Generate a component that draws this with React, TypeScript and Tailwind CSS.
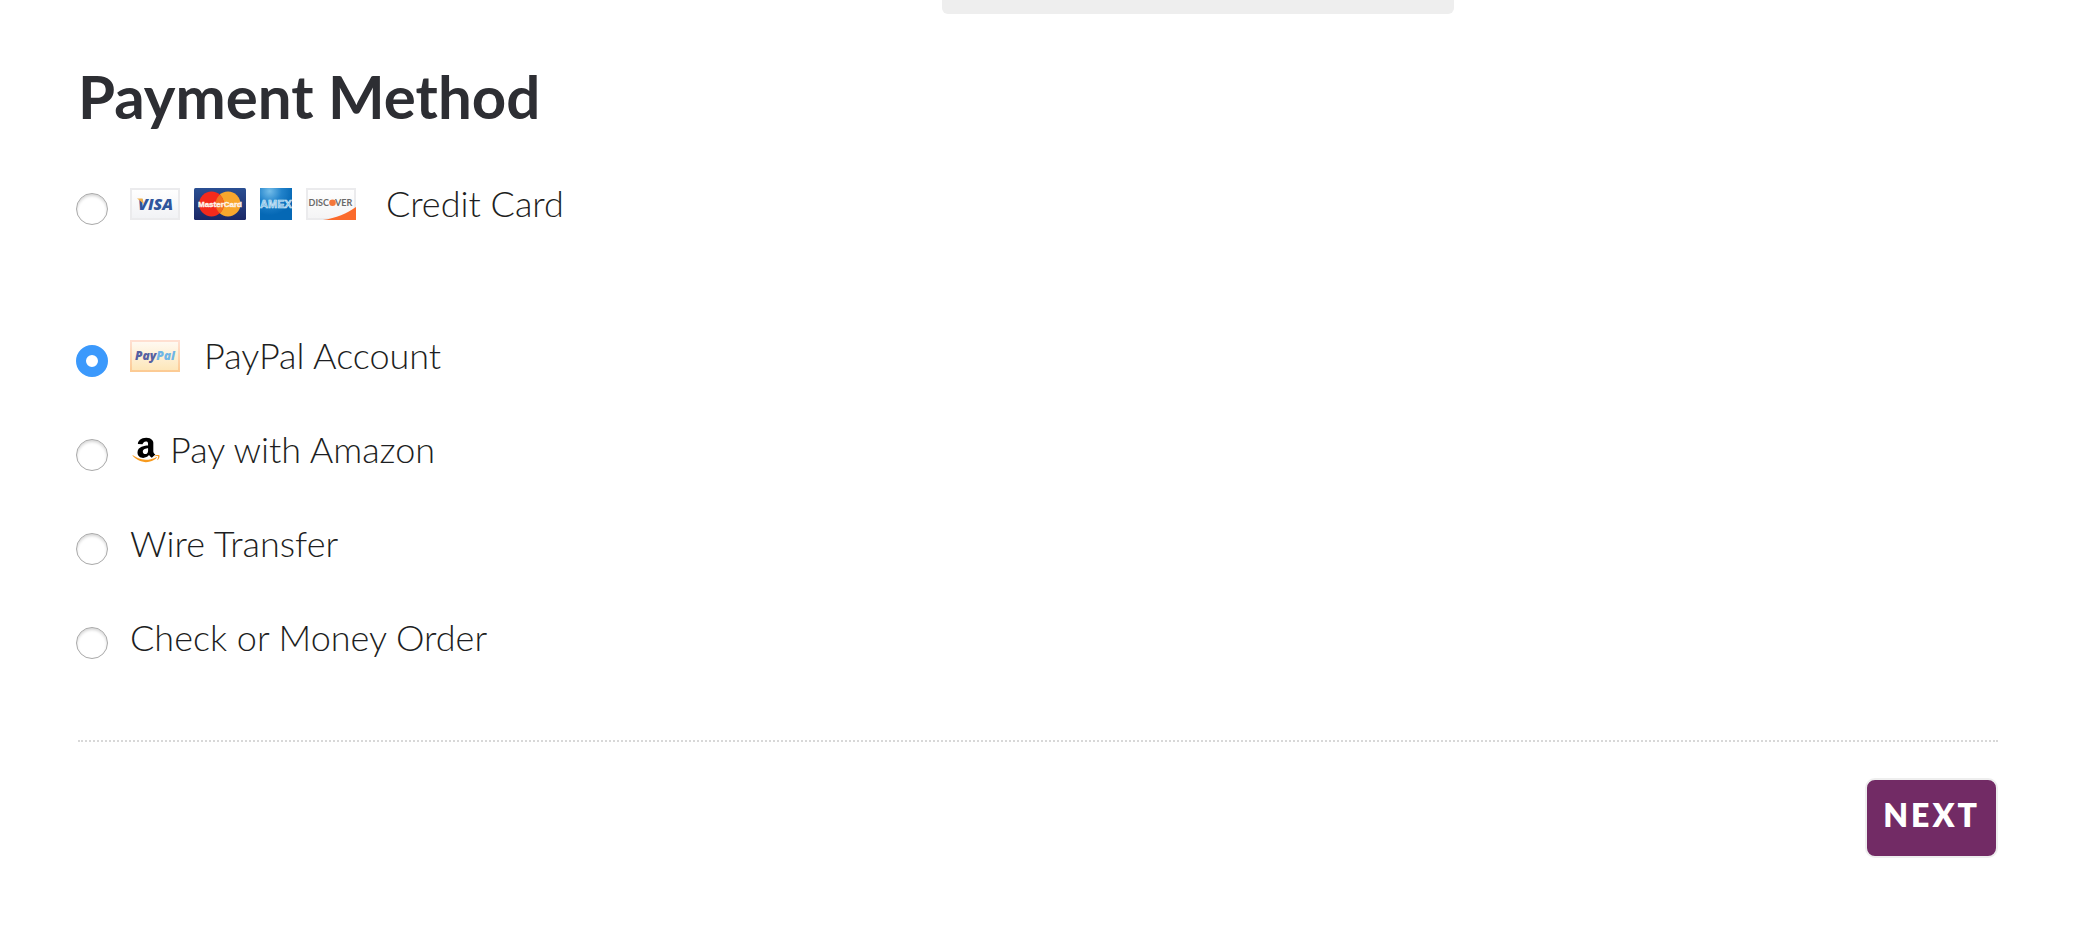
import { useState } from "react";
import type { ReactNode } from "react";

function Visa() {
  return (
    <svg viewBox="0 0 50 32" className="h-8 w-[50px]" role="img" aria-label="Visa">
      <defs>
        <linearGradient id="visa-bg" x1="0" y1="0" x2="0" y2="1">
          <stop offset="0" stopColor="#ffffff" />
          <stop offset="1" stopColor="#f1f2f5" />
        </linearGradient>
      </defs>
      <rect x="1" y="1" width="48" height="30" fill="url(#visa-bg)" stroke="#ebebed" strokeWidth="2" />
      <text x="8" y="22" fontFamily="'Open Sans', sans-serif" fontSize="16" fontWeight="800" fontStyle="italic" fill="#2f559d">
        VISA
      </text>
      <path d="M7 10.500h5.500l1.600 6C12 14.500 10 12.500 7 10.500z" fill="#efb04c" />
    </svg>
  );
}

function MasterCard() {
  return (
    <svg viewBox="0 0 52 32" className="h-8 w-[52px]" role="img" aria-label="MasterCard">
      <defs>
        <linearGradient id="mc-bg" x1="0" y1="0" x2="0" y2="1">
          <stop offset="0" stopColor="#2a4f92" />
          <stop offset="1" stopColor="#1b2766" />
        </linearGradient>
      </defs>
      <rect width="52" height="32" rx="1.500" fill="url(#mc-bg)" />
      <circle cx="34" cy="16" r="12.500" fill="#f8a72d" />
      <circle cx="17.500" cy="16" r="12.500" fill="#f52a1c" />
      <path d="M25.700 6.700a12.500 12.500 0 0 1 0 18.600a12.500 12.500 0 0 1 0-18.600z" fill="#f2711f" />
      <text
        x="26"
        y="19"
        textAnchor="middle"
        fontFamily="'Liberation Sans', sans-serif"
        fontSize="8"
        fontWeight="700"
        fill="#fff3ea"
        stroke="#fff3ea"
        strokeWidth="0.4"
      >
        MasterCard
      </text>
    </svg>
  );
}

function Amex() {
  return (
    <svg viewBox="0 0 32 32" className="size-8 overflow-hidden" role="img" aria-label="American Express">
      <defs>
        <radialGradient id="amex-bg" cx="0.3" cy="0.1" r="0.75">
          <stop offset="0" stopColor="#74bde9" />
          <stop offset="0.5" stopColor="#2283cb" />
          <stop offset="1" stopColor="#0568b5" />
        </radialGradient>
      </defs>
      <rect width="32" height="32" fill="url(#amex-bg)" />
      <text x="16" y="20" textAnchor="middle" fontFamily="'Liberation Sans', sans-serif" fontSize="11" fontWeight="700" fill="#7fbce6" stroke="#d9ecf9" strokeWidth="0.6">
        AMEX
      </text>
    </svg>
  );
}

function Discover() {
  return (
    <svg viewBox="0 0 50 32" className="h-8 w-[50px]" role="img" aria-label="Discover">
      <defs>
        <linearGradient id="disc-bg" x1="0" y1="0" x2="0" y2="1">
          <stop offset="0" stopColor="#ffffff" />
          <stop offset="1" stopColor="#f4f4f5" />
        </linearGradient>
      </defs>
      <rect x="1" y="1" width="48" height="30" fill="url(#disc-bg)" stroke="#ebebed" strokeWidth="2" />
      <path d="M50 19v13H17c13-2 24-6.500 33-13z" fill="#fb6a2b" />
      <text x="23" y="18" textAnchor="end" fontFamily="'Lato', sans-serif" fontSize="9" fontWeight="700" fill="#6a6a6a">
        DISC
      </text>
      <circle cx="26.500" cy="14.700" r="3.300" fill="#f4773b" />
      <text x="29" y="18" fontFamily="'Lato', sans-serif" fontSize="9" fontWeight="700" fill="#6a6a6a">
        VER
      </text>
    </svg>
  );
}

function PayPal() {
  return (
    <svg viewBox="0 0 50 32" className="h-8 w-[50px]" role="img" aria-label="PayPal">
      <defs>
        <linearGradient id="pp-bg" x1="0" y1="0" x2="0" y2="1">
          <stop offset="0" stopColor="#fffaf3" />
          <stop offset="1" stopColor="#fde6b8" />
        </linearGradient>
        <linearGradient id="pp-edge" x1="0" y1="0" x2="0" y2="1">
          <stop offset="0" stopColor="#ffe0d2" />
          <stop offset="1" stopColor="#fccb94" />
        </linearGradient>
      </defs>
      <rect x="1" y="1" width="48" height="30" fill="url(#pp-bg)" stroke="url(#pp-edge)" strokeWidth="2" />
      <text x="25" y="20" textAnchor="middle" fontFamily="'Open Sans', sans-serif" fontSize="12" fontWeight="800" fontStyle="italic" fill="#5560a2">
        Pay<tspan fill="#6fb5e6">Pal</tspan>
      </text>
    </svg>
  );
}

function Amazon() {
  return (
    <svg viewBox="-32 0 512 512" className="size-8" role="img" aria-label="Amazon">
      <path
        fill="#000000"
        transform="translate(0 30) scale(1 0.95)"
        d="M257.2 162.7c-48.7 1.8-169.5 15.5-169.5 117.5 0 109.5 138.3 114 183.5 43.2 6.5 10.2 35.4 37.5 45.3 46.8l56.8-56S341 288.9 341 261.4V114.3C341 89 316.5 32 228.7 32 140.7 32 94 87 94 136.3l73.5 6.8c16.3-49.5 54.2-49.5 54.2-49.5 40.7-.1 35.500 29.8 35.500 69.1zm0 86.8c0 80-84.2 68-84.2 17.2 0-47.2 50.500-56.7 84.2-57.8v40.6z"
      />
      <path
        fill="#f79a1e"
        transform="translate(0 -30)"
        d="M393.2 413c-7.7 10-70 67-174.500 67S34.2 408.500 9.7 379c-6.8-7.7 1-11.3 5.500-8.3C88.500 415.2 203 488.500 387.7 401c7.500-3.7 13.3 2 5.500 12zm39.8 2.2c-6.500 15.8-16 26.8-21.2 31-5.500 4.500-9.500 2.7-6.500-3.8s19.3-46.500 12.7-55c-6.500-8.3-37-4.3-48-3.2-10.8 1-13 2-14-.3-2.3-5.7 21.7-15.500 37.500-17.500 15.7-1.8 41-.8 46 5.7 3.7 5.1 0 27.1-6.500 43.1z"
      />
    </svg>
  );
}

type Method = { id: string; label: string; icons?: ReactNode; row: string; text: string };

const methods: Method[] = [
  {
    id: "card",
    label: "Credit Card",
    icons: (
      <>
        <Visa />
        <MasterCard />
        <Amex />
        <Discover />
      </>
    ),
    row: "mb-[58px]",
    text: "ml-[30px]",
  },
  { id: "paypal", label: "PayPal Account", icons: <PayPal />, row: "", text: "ml-6" },
  { id: "amazon", label: "Pay with Amazon", icons: <Amazon />, row: "", text: "ml-2" },
  { id: "wire", label: "Wire Transfer", row: "", text: "" },
  { id: "check", label: "Check or Money Order", row: "", text: "" },
];

export default function App() {
  const [selected, setSelected] = useState("paypal");

  return (
    <main className="bg-white pr-[82px] pl-[78px] font-['Lato',sans-serif] text-[#2d2e33]">
      <div className="ml-[45%] h-3.5 w-[512px] rounded-b-md bg-[#eeeeee]" />
      <form onSubmit={(e) => e.preventDefault()}>
        <h1 id="payment-title" className="mt-[46px] text-[60px] leading-[72px] font-bold">
          Payment Method
        </h1>
        <div role="radiogroup" aria-labelledby="payment-title" className="mt-12 -ml-0.5 flex flex-col gap-[46px]">
          {methods.map((m) => (
            <div key={m.id} className={`flex h-12 items-center ${m.row}`}>
              <input
                type="radio"
                id={m.id}
                name="payment"
                value={m.id}
                checked={selected === m.id}
                onChange={() => setSelected(m.id)}
                className="mt-2.5 size-8 shrink-0 appearance-none rounded-full border border-[#a9a9a9] bg-white shadow-[inset_0_2px_3px_rgba(0,0,0,0.16)] checked:border-[10px] checked:border-[#3b99fc] checked:shadow-none"
              />
              <label htmlFor={m.id} className="ml-[22px] flex items-center text-[36px] leading-[46px] font-light text-[#1d1e22]">
                {m.icons && <span className="flex items-center gap-3.5">{m.icons}</span>}
                <span className={`pb-0.5 ${m.text}`}>{m.label}</span>
              </label>
            </div>
          ))}
        </div>
        <div className="mt-[78px] border-t-2 border-dotted border-[#d8d8d8]" />
        <div className="mt-9 flex justify-end">
          <button
            type="submit"
            className="h-20 rounded-[10px] border-2 border-[#eeeeee] bg-[#722b65] px-4 pb-1.5 text-[32px] leading-10 font-extrabold tracking-[3px] text-white"
          >
            NEXT
          </button>
        </div>
      </form>
    </main>
  );
}
